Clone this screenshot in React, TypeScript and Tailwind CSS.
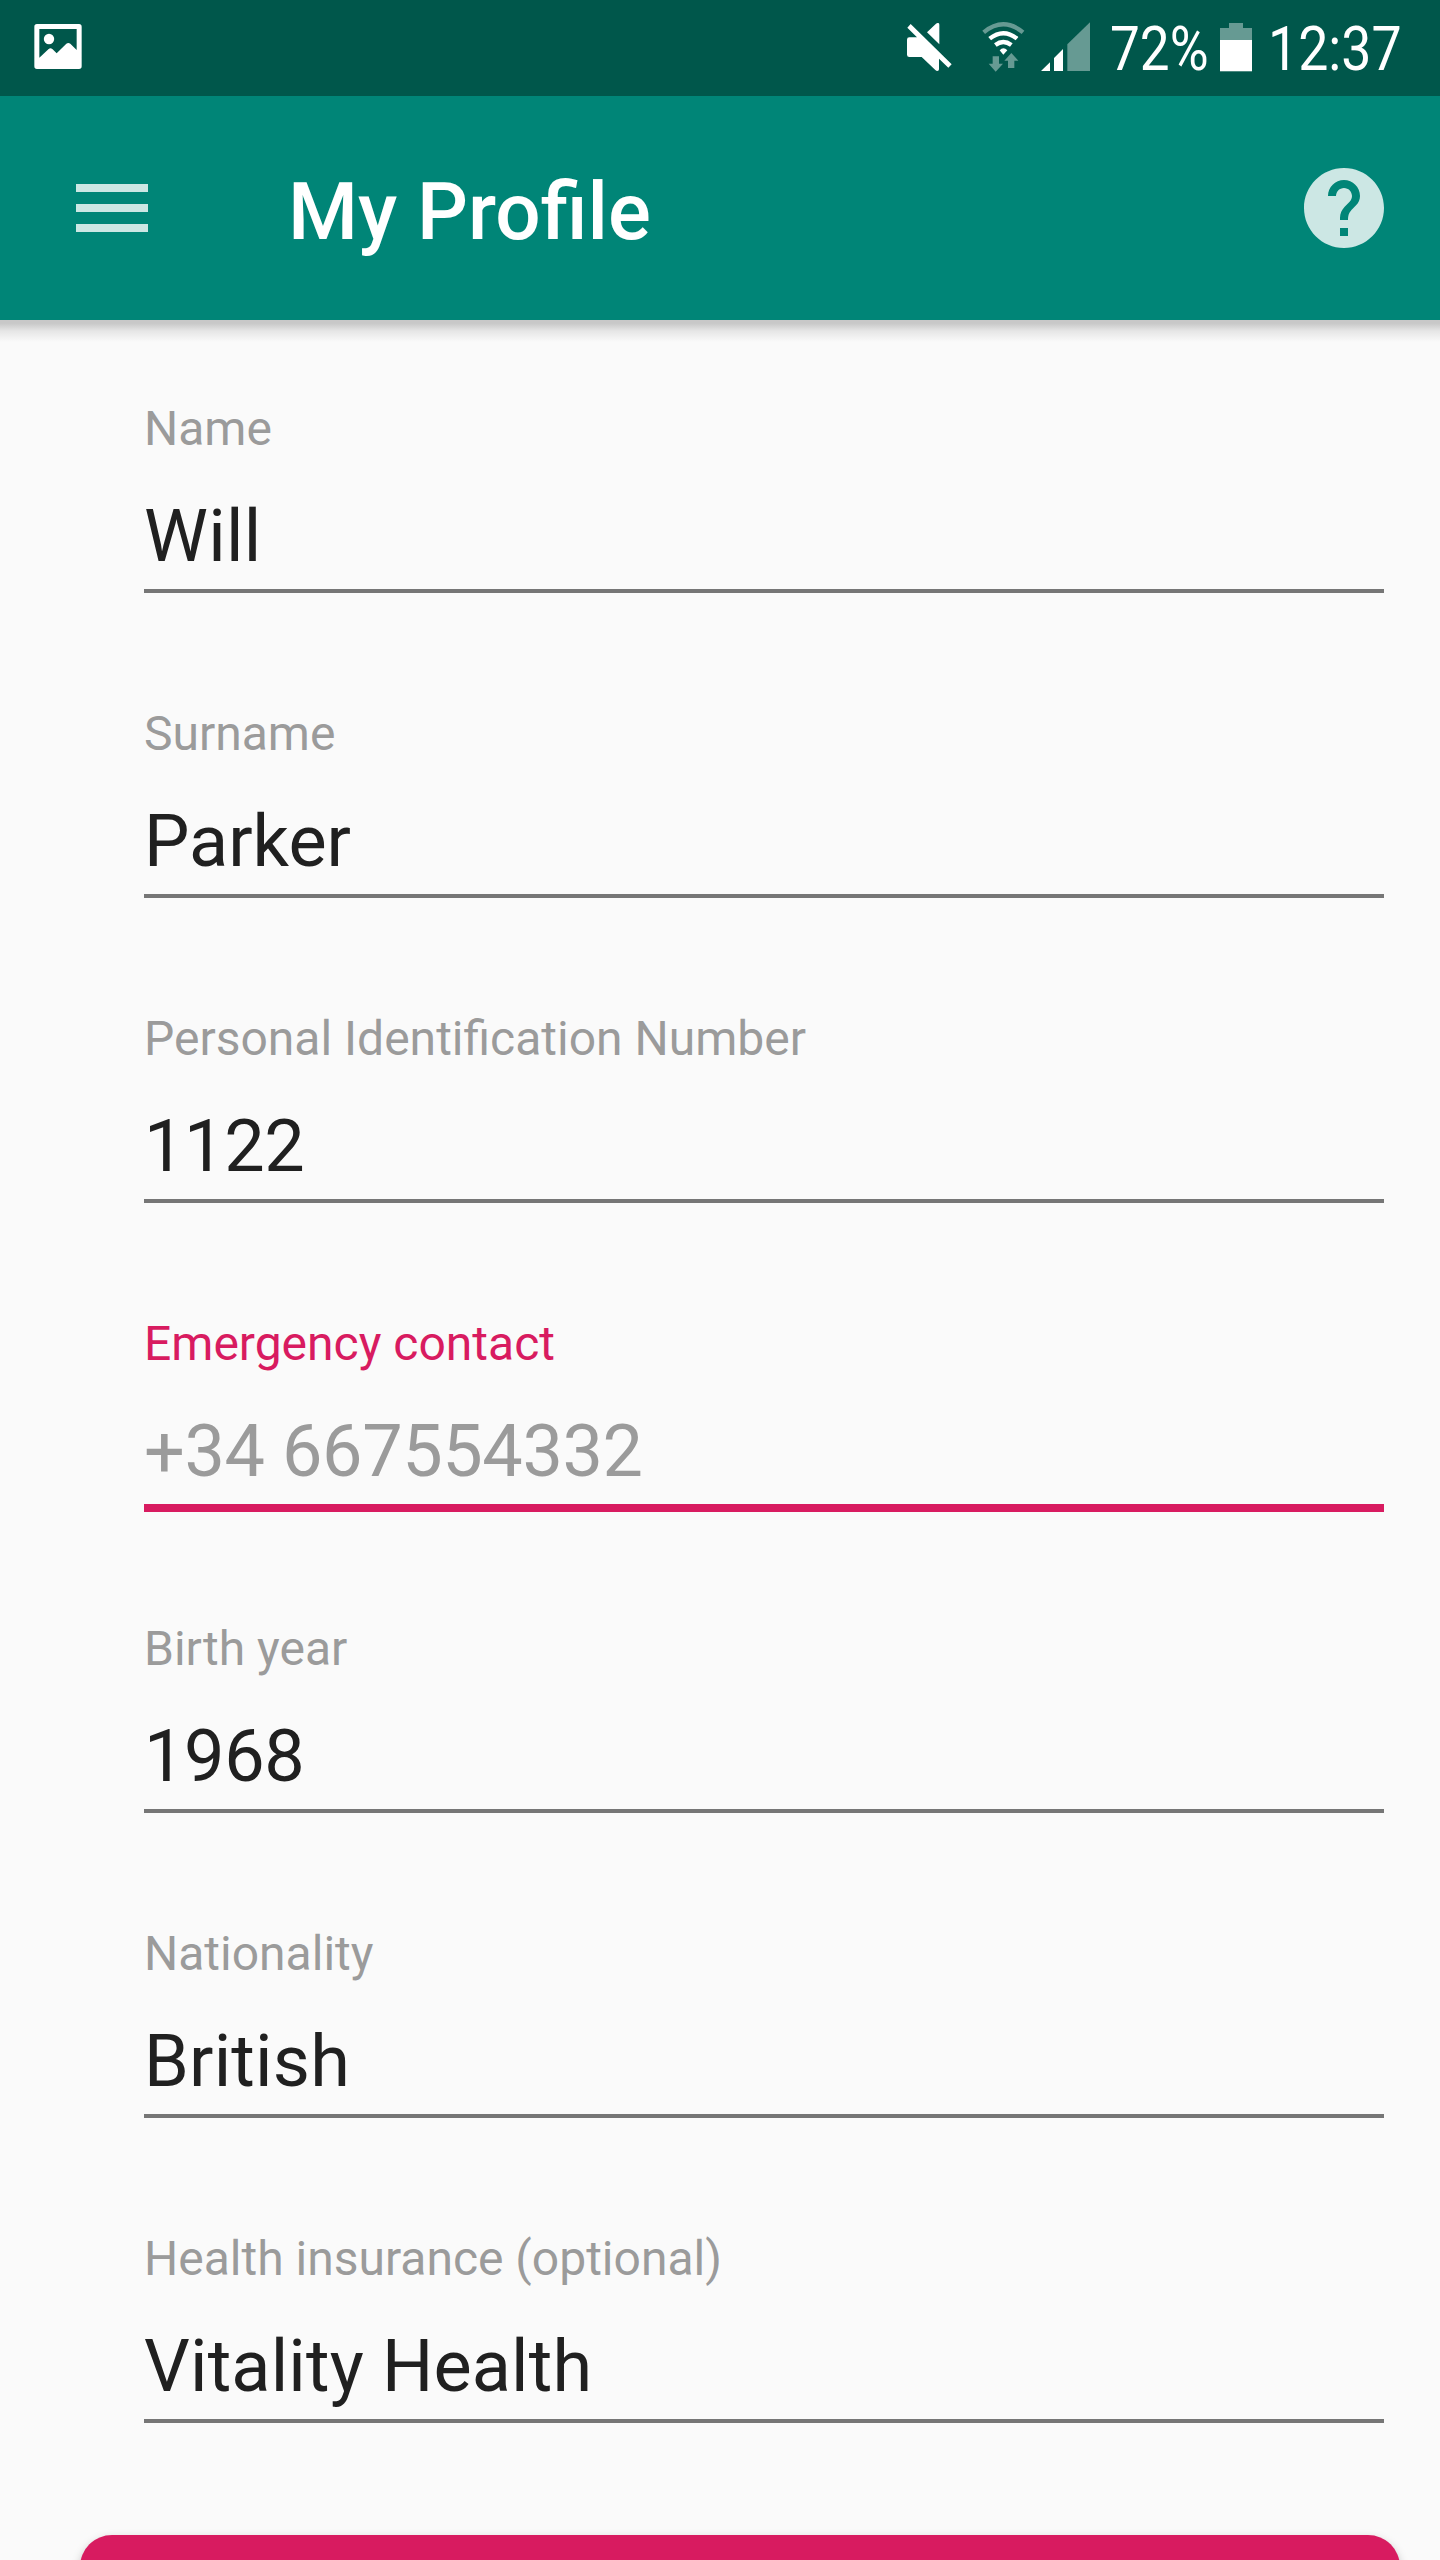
type Field = { label: string; value: string; active?: boolean; tracking: string };

const fields: Field[] = [
  { label: "Name", value: "Will", tracking: "tracking-[0.3px]" },
  { label: "Surname", value: "Parker", tracking: "tracking-normal" },
  { label: "Personal Identification Number", value: "1122", tracking: "tracking-[-0.4px]" },
  { label: "Emergency contact", value: "+34 667554332", active: true, tracking: "tracking-[-0.4px]" },
  { label: "Birth year", value: "1968", tracking: "tracking-[-0.4px]" },
  { label: "Nationality", value: "British", tracking: "tracking-[0.2px]" },
  { label: "Health insurance (optional)", value: "Vitality Health", tracking: "tracking-[0.15px]" },
];

function ImageIcon() {
  return (
    <svg className="ml-[34px] h-[52px] w-[48px]" viewBox="102 60 144 156" fill="#fff">
      <path
        fillRule="evenodd"
        d="M111 72H237Q245 72 245 80V199Q245 207 237 207H111Q103 207 103 199V80Q103 72 111 72ZM118 87V173L146 147Q151 143 157 147L170 160L199 131Q205 127 211 131L230 150V87Z"
      />
      <circle cx="147" cy="117" r="15.5" />
    </svg>
  );
}

function MuteIcon() {
  return (
    <svg className="h-[52px] w-[48px]" viewBox="45 60 144 156" fill="#fff">
      <path d="M62 72L185 193L175 203L147 176V208Q147 213 142 213Q139 213 136 210L95 171H58Q51 171 51 164V119Q51 112 58 112H81L52 83Z" />
      <path d="M111 97L138 71Q141 68 145 69Q148 70 148 74V133Z" />
    </svg>
  );
}

function WifiIcon() {
  return (
    <svg className="ml-[27px] h-[52px] w-[47px]" viewBox="270 60 141 156" fill="none">
      <path d="M281 97Q340 49 399 97" stroke="#669a93" strokeWidth="13" />
      <path d="M299 116Q340 83 381 116" stroke="#fff" strokeWidth="13" />
      <path d="M316 135Q340 117 364 135" stroke="#fff" strokeWidth="13" />
      <path d="M329 151Q340 138 352 151L340 164Z" fill="#fff" />
      <path d="M308 169H327V191H339L317 215L296 191H308ZM364 159L385 182H373V204H354V182H343Z" fill="#669a93" />
    </svg>
  );
}

function SignalIcon() {
  return (
    <svg className="ml-[13px] h-[52px] w-[51px]" viewBox="450 60 153 156">
      <path d="M453 213L480 187V213ZM492 213V174L519 147V213Z" fill="#fff" />
      <path d="M532 213V133L600 67V213Z" fill="#669a93" />
    </svg>
  );
}

function BatteryIcon() {
  return (
    <svg className="h-[52px] w-[32px]" viewBox="360 60 96 156">
      <path d="M360 84H387V69H429V84H456V215H360Z" fill="#669a93" />
      <path d="M360 120H456V213H360Z" fill="#fff" />
    </svg>
  );
}

function StatusBar() {
  return (
    <div className="flex h-24 items-start bg-[#00574b] pt-5 text-white">
      <ImageIcon />
      <div className="ml-[823px] flex items-start">
        <MuteIcon />
        <WifiIcon />
        <SignalIcon />
        <div className="ml-[19px] w-[110px] text-[61px] leading-[58px] whitespace-nowrap">
          <span className="inline-block origin-left scale-x-[0.87]">72%</span>
        </div>
        <BatteryIcon />
        <div className="ml-[16px] w-[140px] text-[61px] leading-[58px] whitespace-nowrap">
          <span className="inline-block origin-left scale-x-[0.88]">12:37</span>
        </div>
      </div>
    </div>
  );
}

function AppBar() {
  return (
    <header className="relative flex h-56 items-center bg-[#008577] pr-[48px] pl-[64px]">
      <svg className="h-24 w-24" viewBox="0 0 24 24" fill="#cce7e4">
        <path d="M3 18h18v-2H3v2zm0-5h18v-2H3v2zm0-7v2h18V6H3z" />
      </svg>
      <h1 className="mt-2 ml-[128px] text-[80px] leading-[94px] font-medium text-white">My Profile</h1>
      <svg className="ml-auto h-24 w-24" viewBox="0 0 24 24" fill="#cce7e4">
        <path d="M12 2C6.48 2 2 6.48 2 12s4.48 10 10 10 10-4.48 10-10S17.52 2 12 2zm1 17h-2v-2h2v2zm2.07-7.75l-.9.92C13.45 12.9 13 13.5 13 15h-2v-.5c0-1.1.45-2.1 1.17-2.83l1.24-1.26c.37-.36.59-.86.59-1.41 0-1.1-.9-2-2-2s-2 .9-2 2H8c0-2.21 1.79-4 4-4s4 1.79 4 4c0 .88-.36 1.68-.93 2.25z" />
      </svg>
      <div className="absolute inset-x-0 top-full h-[22px] bg-linear-to-b from-[#c8c8c8] from-15% via-[#e6e6e6] via-50% to-[#fafafa]" />
    </header>
  );
}

function FormField({ label, value, active, tracking }: Field) {
  return (
    <div className="h-[305px]">
      <div className={`h-[57px] text-[48px] leading-[57px] ${active ? "text-[#d81b60]" : "text-[#9b9b9b]"}`}>{label}</div>
      <div className={`mt-[37px] h-[85px] text-[72px] leading-[85px] ${tracking} ${active ? "text-[#9b9b9b]" : "text-[#202020]"}`}>
        {value}
      </div>
      <div className={active ? "mt-[10px] h-2 bg-[#d81b60]" : "mt-[10px] h-1 bg-[#767676]"} />
    </div>
  );
}

export default function App() {
  return (
    <div className="h-[2560px] w-[1440px] overflow-hidden bg-[#fafafa] font-[Roboto,sans-serif]">
      <StatusBar />
      <AppBar />
      <main className="pt-[80px] pr-[56px] pl-[144px]">
        {fields.map((f) => (
          <FormField key={f.label} {...f} />
        ))}
      </main>
      <div className="mr-[40px] ml-[80px] h-[192px] rounded-[32px] bg-[#d81b60] shadow-[0_4px_10px_rgba(0,0,0,0.25)]" />
    </div>
  );
}
